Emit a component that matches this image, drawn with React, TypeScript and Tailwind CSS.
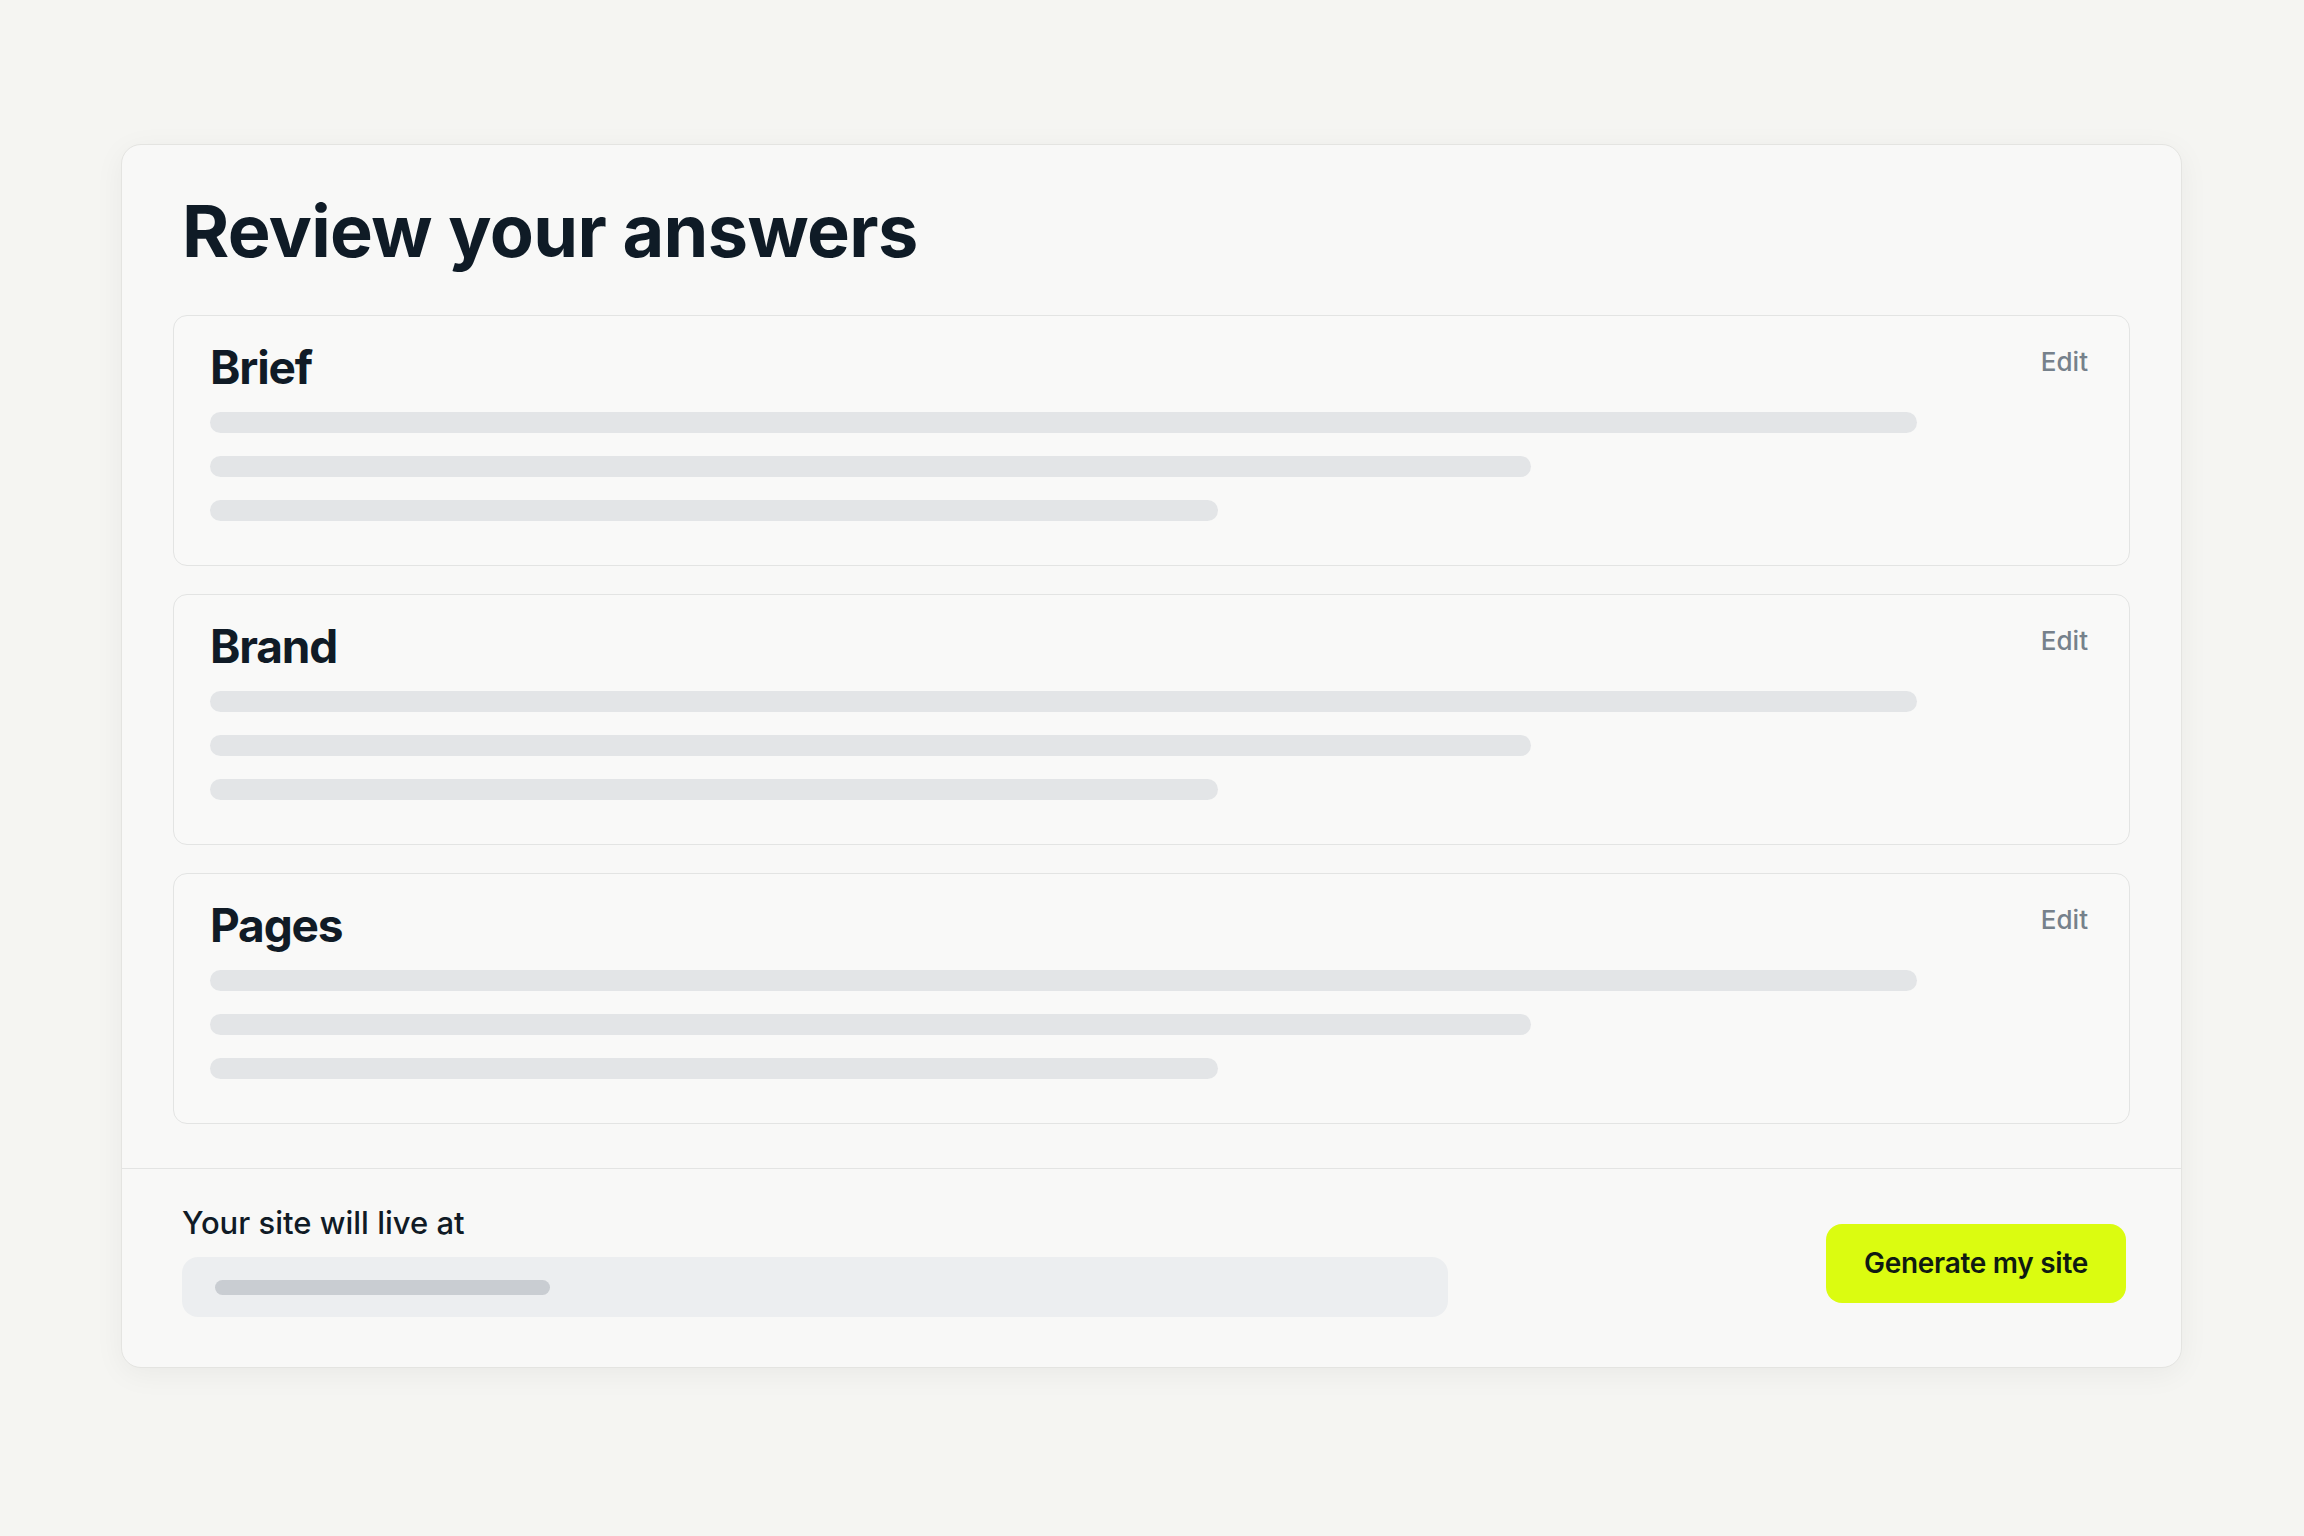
import React from "react";

const sections = ["Brief", "Brand", "Pages"];

function SectionCard({ title }: { title: string }) {
  return (
    <div className="flex items-start justify-between rounded-[14px] border border-[#e3e4e3] bg-[#f9f9f8] pl-[36px] pr-[41px] pt-[28px] pb-[44px]">
      <div className="flex flex-col">
        <h2 className="text-[46px] font-bold leading-none tracking-[-0.025em] text-[#101b26]">
          {title}
        </h2>
        <div className="mt-[22px] flex flex-col gap-[23px]">
          <div className="h-[21px] w-[1707px] rounded-full bg-[#e3e5e7]" />
          <div className="h-[21px] w-[1321px] rounded-full bg-[#e3e5e7]" />
          <div className="h-[21px] w-[1008px] rounded-full bg-[#e3e5e7]" />
        </div>
      </div>
      <button className="mt-[5px] text-[26px] font-medium leading-none text-[#76818b]">
        Edit
      </button>
    </div>
  );
}

export default function App() {
  return (
    <div
      className="min-h-screen w-full bg-[#f5f5f2] pt-[144px] pl-[121px]"
      style={{ fontFamily: "Inter, 'Noto Sans', sans-serif" }}
    >
      <div className="w-[2061px] overflow-hidden rounded-[20px] border border-[#e4e4e1] bg-[#f8f8f7] shadow-[0_6px_30px_rgba(0,0,0,0.05)]">
        <div className="px-[51px] pt-[50px]">
          <h1 className="pl-[9px] text-[72px] font-bold leading-none tracking-[-0.009em] text-[#0f1b26]">
            Review your answers
          </h1>
          <div className="mt-[48px] flex flex-col gap-[28px]">
            {sections.map((s) => (
              <SectionCard key={s} title={s} />
            ))}
          </div>
        </div>

        <div className="mt-[44px] flex items-center justify-between border-t border-[#e3e4e3] pl-[60px] pr-[55px] pt-[38px] pb-[50px]">
          <div className="flex flex-col">
            <span className="text-[31px] font-medium leading-none text-[#101b26]">
              Your site will live at
            </span>
            <div className="mt-[19px] flex h-[60px] w-[1266px] items-center rounded-[16px] bg-[#eceef0] pl-[33px]">
              <div className="h-[15px] w-[335px] rounded-full bg-[#c9cdd2]" />
            </div>
          </div>
          <button className="mb-[-2px] flex h-[79px] w-[300px] items-center justify-center rounded-[16px] bg-[#dbfc10] text-[28px] font-semibold tracking-[-0.01em] text-[#0f1a12]">
            Generate my site
          </button>
        </div>
      </div>
    </div>
  );
}
